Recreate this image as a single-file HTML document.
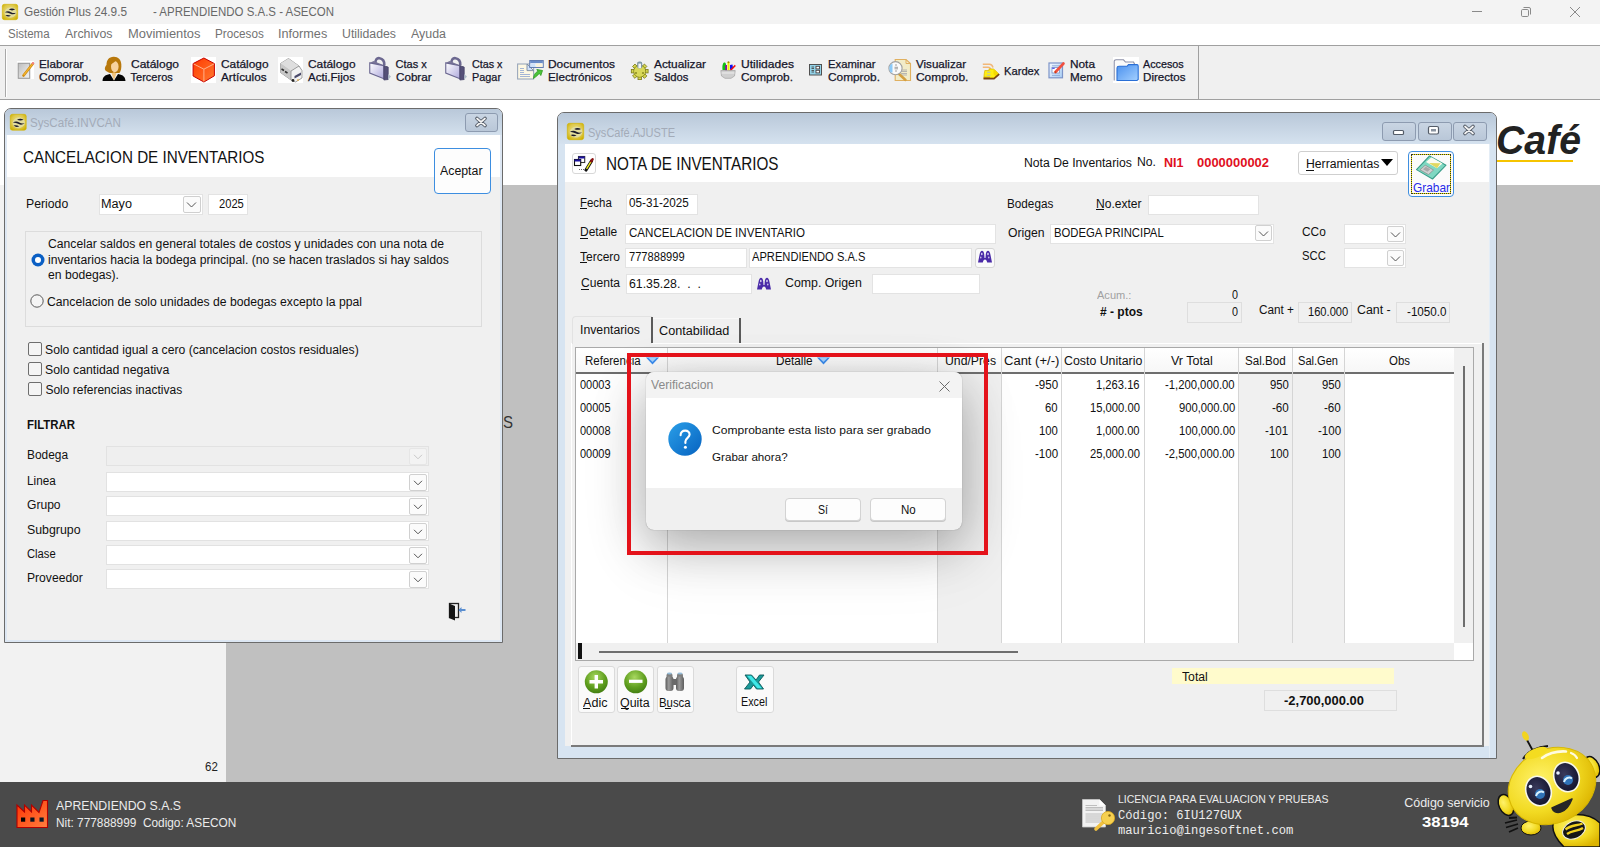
<!DOCTYPE html>
<html><head><meta charset="utf-8"><style>
html,body{margin:0;padding:0;}
body{width:1600px;height:847px;position:relative;overflow:hidden;background:#c0c0c0;font-family:"Liberation Sans",sans-serif;}
.t{position:absolute;white-space:pre;line-height:normal;transform-origin:0 0;}
svg{overflow:visible}
</style></head><body>
<div style="position:absolute;left:0px;top:0px;width:1600px;height:24px;background:#f3f3f3"></div>
<div style="position:absolute;left:0px;top:24px;width:1600px;height:21px;background:#ffffff"></div>
<div style="position:absolute;left:0px;top:45px;width:1600px;height:1px;background:#a0a0a0"></div>
<div style="position:absolute;left:0px;top:46px;width:1600px;height:53px;background:#f0f0f0"></div>
<div style="position:absolute;left:0px;top:99px;width:1600px;height:1px;background:#a0a0a0"></div>
<div style="position:absolute;left:0px;top:100px;width:1600px;height:85px;background:#ffffff"></div>
<div style="position:absolute;left:0px;top:185px;width:226px;height:597px;background:#f2f2f2"></div>
<div style="position:absolute;left:0px;top:782px;width:1600px;height:65px;background:#4a4a4a"></div>
<div class="t" style="left:24.4px;top:5.2px;font:12.5px 'Liberation Sans';color:#686868;transform:scaleX(0.9440);">Gestión Plus 24.9.5</div>
<div class="t" style="left:152.5px;top:5.2px;font:12.5px 'Liberation Sans';color:#686868;transform:scaleX(0.9175);">- APRENDIENDO S.A.S - ASECON</div>
<div style="position:absolute;left:1472px;top:11px;width:10px;height:1px;background:#8a8a8a"></div>
<svg style="position:absolute;left:1520px;top:6px" width="12" height="12" viewBox="0 0 12 12"><rect x="1.5" y="3.5" width="7" height="7" rx="1.2" fill="none" stroke="#8a8a8a" stroke-width="1"/><path d="M3.5 1.5 H9 A1.5 1.5 0 0 1 10.5 3 V8.5" fill="none" stroke="#8a8a8a" stroke-width="1"/></svg>
<svg style="position:absolute;left:1570px;top:7px" width="10" height="10" viewBox="0 0 10 10"><path d="M0 0 L10 10 M10 0 L0 10" stroke="#8a8a8a" stroke-width="1"/></svg>
<div class="t" style="left:7.8px;top:27.3px;font:12px 'Liberation Sans';color:#727272;transform:scaleX(0.9594);">Sistema</div>
<div class="t" style="left:65.0px;top:27.3px;font:12px 'Liberation Sans';color:#727272;transform:scaleX(1.0323);">Archivos</div>
<div class="t" style="left:127.5px;top:27.3px;font:12px 'Liberation Sans';color:#727272;transform:scaleX(1.0763);">Movimientos</div>
<div class="t" style="left:215.0px;top:27.3px;font:12px 'Liberation Sans';color:#727272;transform:scaleX(0.9744);">Procesos</div>
<div class="t" style="left:278.2px;top:27.3px;font:12px 'Liberation Sans';color:#727272;transform:scaleX(1.0549);">Informes</div>
<div class="t" style="left:342.0px;top:27.3px;font:12px 'Liberation Sans';color:#727272;transform:scaleX(1.0246);">Utilidades</div>
<div class="t" style="left:411.2px;top:27.3px;font:12px 'Liberation Sans';color:#727272;transform:scaleX(1.0351);">Ayuda</div>
<div style="position:absolute;left:5px;top:49px;width:1px;height:48px;background:#a8a8a8"></div>
<div style="position:absolute;left:6px;top:49px;width:1px;height:48px;background:#ffffff"></div>
<div style="position:absolute;left:1198px;top:45px;width:1px;height:55px;background:#a0a0a0"></div>
<div class="t" style="left:38.8px;top:57.8px;font:11px 'Liberation Sans';color:#15152a;transform:scaleX(1.0655);-webkit-text-stroke:0.25px #15152a;">Elaborar</div>
<div class="t" style="left:38.8px;top:71.0px;font:11px 'Liberation Sans';color:#15152a;transform:scaleX(1.0870);-webkit-text-stroke:0.25px #15152a;">Comprob.</div>
<div class="t" style="left:130.6px;top:57.8px;font:11px 'Liberation Sans';color:#15152a;transform:scaleX(1.0897);-webkit-text-stroke:0.25px #15152a;">Catálogo</div>
<div class="t" style="left:130.6px;top:71.0px;font:11px 'Liberation Sans';color:#15152a;-webkit-text-stroke:0.25px #15152a;">Terceros</div>
<div class="t" style="left:220.6px;top:57.8px;font:11px 'Liberation Sans';color:#15152a;transform:scaleX(1.0784);-webkit-text-stroke:0.25px #15152a;">Catálogo</div>
<div class="t" style="left:220.6px;top:71.0px;font:11px 'Liberation Sans';color:#15152a;transform:scaleX(1.0655);-webkit-text-stroke:0.25px #15152a;">Artículos</div>
<div class="t" style="left:308.0px;top:57.8px;font:11px 'Liberation Sans';color:#15152a;transform:scaleX(1.0807);-webkit-text-stroke:0.25px #15152a;">Catálogo</div>
<div class="t" style="left:308.0px;top:71.0px;font:11px 'Liberation Sans';color:#15152a;transform:scaleX(1.0532);-webkit-text-stroke:0.25px #15152a;">Acti.Fijos</div>
<div class="t" style="left:395.6px;top:57.8px;font:11px 'Liberation Sans';color:#15152a;-webkit-text-stroke:0.25px #15152a;">Ctas x</div>
<div class="t" style="left:395.6px;top:71.0px;font:11px 'Liberation Sans';color:#15152a;transform:scaleX(1.0587);-webkit-text-stroke:0.25px #15152a;">Cobrar</div>
<div class="t" style="left:472.0px;top:57.8px;font:11px 'Liberation Sans';color:#15152a;transform:scaleX(0.9780);-webkit-text-stroke:0.25px #15152a;">Ctas x</div>
<div class="t" style="left:472.0px;top:71.0px;font:11px 'Liberation Sans';color:#15152a;transform:scaleX(0.9878);-webkit-text-stroke:0.25px #15152a;">Pagar</div>
<div class="t" style="left:547.5px;top:57.8px;font:11px 'Liberation Sans';color:#15152a;transform:scaleX(1.0847);-webkit-text-stroke:0.25px #15152a;">Documentos</div>
<div class="t" style="left:547.5px;top:71.0px;font:11px 'Liberation Sans';color:#15152a;transform:scaleX(1.0639);-webkit-text-stroke:0.25px #15152a;">Electrónicos</div>
<div class="t" style="left:653.8px;top:57.8px;font:11px 'Liberation Sans';color:#15152a;transform:scaleX(1.0767);-webkit-text-stroke:0.25px #15152a;">Actualizar</div>
<div class="t" style="left:653.8px;top:71.0px;font:11px 'Liberation Sans';color:#15152a;transform:scaleX(1.0226);-webkit-text-stroke:0.25px #15152a;">Saldos</div>
<div class="t" style="left:740.6px;top:57.8px;font:11px 'Liberation Sans';color:#15152a;transform:scaleX(1.0970);-webkit-text-stroke:0.25px #15152a;">Utilidades</div>
<div class="t" style="left:740.6px;top:71.0px;font:11px 'Liberation Sans';color:#15152a;transform:scaleX(1.0767);-webkit-text-stroke:0.25px #15152a;">Comprob.</div>
<div class="t" style="left:828.0px;top:57.8px;font:11px 'Liberation Sans';color:#15152a;transform:scaleX(1.0243);-webkit-text-stroke:0.25px #15152a;">Examinar</div>
<div class="t" style="left:828.0px;top:71.0px;font:11px 'Liberation Sans';color:#15152a;transform:scaleX(1.0767);-webkit-text-stroke:0.25px #15152a;">Comprob.</div>
<div class="t" style="left:915.6px;top:57.8px;font:11px 'Liberation Sans';color:#15152a;transform:scaleX(1.0526);-webkit-text-stroke:0.25px #15152a;">Visualizar</div>
<div class="t" style="left:915.6px;top:71.0px;font:11px 'Liberation Sans';color:#15152a;transform:scaleX(1.0850);-webkit-text-stroke:0.25px #15152a;">Comprob.</div>
<div class="t" style="left:1070.0px;top:57.8px;font:11px 'Liberation Sans';color:#15152a;transform:scaleX(1.0753);-webkit-text-stroke:0.25px #15152a;">Nota</div>
<div class="t" style="left:1070.0px;top:71.0px;font:11px 'Liberation Sans';color:#15152a;transform:scaleX(1.0634);-webkit-text-stroke:0.25px #15152a;">Memo</div>
<div class="t" style="left:1143.0px;top:57.8px;font:11px 'Liberation Sans';color:#15152a;transform:scaleX(0.9801);-webkit-text-stroke:0.25px #15152a;">Accesos</div>
<div class="t" style="left:1143.0px;top:71.0px;font:11px 'Liberation Sans';color:#15152a;transform:scaleX(1.0559);-webkit-text-stroke:0.25px #15152a;">Directos</div>
<div class="t" style="left:1004.0px;top:65.0px;font:11px 'Liberation Sans';color:#15152a;transform:scaleX(1.0155);-webkit-text-stroke:0.25px #15152a;">Kardex</div>
<div style="position:absolute;left:4px;top:108px;width:497px;height:533px;border:1px solid #6b6b6b;border-radius:7px 7px 0 0;background:#dde7f3"></div>
<div style="position:absolute;left:5px;top:109px;width:497px;height:26px;background:linear-gradient(#b9c8d9,#d3e0ed);border-radius:6px 6px 0 0"></div>
<div style="position:absolute;left:7px;top:135px;width:493px;height:42px;background:#ffffff"></div>
<div style="position:absolute;left:7px;top:177px;width:493px;height:463px;background:#f0f0f0"></div>
<div class="t" style="left:30.4px;top:115.7px;font:12.5px 'Liberation Sans';color:#a3abb8;transform:scaleX(0.9290);">SysCafé.INVCAN</div>
<div style="position:absolute;left:465px;top:113px;width:31px;height:17px;border:1px solid #8d9bb0;border-radius:3px;background:linear-gradient(#c9d5e3,#b9c7d8)"></div>
<svg style="position:absolute;left:475px;top:117px" width="12" height="10" viewBox="0 0 12 10"><path d="M2 1.5 L10 8.5 M10 1.5 L2 8.5" stroke="#4e5662" stroke-width="3.6" stroke-linecap="round"/><path d="M2 1.5 L10 8.5 M10 1.5 L2 8.5" stroke="#f4f4f4" stroke-width="1.7" stroke-linecap="round"/></svg>
<div class="t" style="left:23.3px;top:148.4px;font:17px 'Liberation Sans';color:#111;transform:scaleX(0.8950);">CANCELACION DE INVENTARIOS</div>
<div style="position:absolute;left:434px;top:148px;width:55px;height:44px;border:1px solid #3d8ee0;border-radius:4px;background:#fdfdfd"></div>
<div class="t" style="left:440.2px;top:164.1px;font:12px 'Liberation Sans';color:#111;transform:scaleX(1.0276);">Aceptar</div>
<div class="t" style="left:26.4px;top:197.2px;font:12.5px 'Liberation Sans';color:#111;transform:scaleX(0.9793);">Periodo</div>
<div style="position:absolute;left:99px;top:194px;width:102px;height:19px;background:#fff;border:1px solid #e3e3e3"></div>
<div style="position:absolute;left:183px;top:196px;width:16px;height:15px;background:#fbfbfb;border:1px solid #cfcfcf;border-radius:2px"></div>
<div class="t" style="left:101.0px;top:197.2px;font:12.5px 'Liberation Sans';color:#111;transform:scaleX(1.0138);">Mayo</div>
<div style="position:absolute;left:208px;top:194px;width:38px;height:19px;background:#fff;border:1px solid #e3e3e3"></div>
<div class="t" style="left:219.0px;top:197.2px;font:12.5px 'Liberation Sans';color:#111;transform:scaleX(0.8917);">2025</div>
<div style="position:absolute;left:25px;top:231px;width:455px;height:94px;border:1px solid #dcdcdc"></div>
<div class="t" style="left:48.1px;top:236.9px;font:12px 'Liberation Sans';color:#111;transform:scaleX(1.0147);">Cancelar saldos en general totales de costos y unidades con una nota de</div>
<div class="t" style="left:48.1px;top:252.6px;font:12px 'Liberation Sans';color:#111;transform:scaleX(1.0149);">inventarios hacia la bodega principal. (no se hacen traslados si hay saldos</div>
<div class="t" style="left:48.1px;top:268.1px;font:12px 'Liberation Sans';color:#111;transform:scaleX(1.0134);">en bodegas).</div>
<div class="t" style="left:47.3px;top:294.7px;font:12px 'Liberation Sans';color:#111;transform:scaleX(1.0154);">Cancelacion de solo unidades de bodegas excepto la ppal</div>
<svg style="position:absolute;left:31px;top:253px" width="14" height="14" viewBox="0 0 14 14"><circle cx="7" cy="7" r="6.5" fill="#0a5fc4"/><circle cx="7" cy="7" r="3" fill="#fff"/></svg>
<svg style="position:absolute;left:30px;top:294px" width="14" height="14" viewBox="0 0 14 14"><circle cx="7" cy="7" r="6.2" fill="#f4f4f4" stroke="#5a5a5a" stroke-width="1"/></svg>
<div style="position:absolute;left:28px;top:342px;width:12px;height:12px;border:1px solid #6e6e6e;border-radius:2px;background:#f4f4f4"></div>
<div class="t" style="left:45.4px;top:343.1px;font:12px 'Liberation Sans';color:#111;transform:scaleX(1.0157);">Solo cantidad igual a cero (cancelacion costos residuales)</div>
<div style="position:absolute;left:28px;top:362px;width:12px;height:12px;border:1px solid #6e6e6e;border-radius:2px;background:#f4f4f4"></div>
<div class="t" style="left:45.4px;top:363.1px;font:12px 'Liberation Sans';color:#111;transform:scaleX(1.0236);">Solo cantidad negativa</div>
<div style="position:absolute;left:28px;top:382px;width:12px;height:12px;border:1px solid #6e6e6e;border-radius:2px;background:#f4f4f4"></div>
<div class="t" style="left:45.4px;top:383.1px;font:12px 'Liberation Sans';color:#111;">Solo referencias inactivas</div>
<div class="t" style="left:26.5px;top:418.1px;font:bold 12px 'Liberation Sans';color:#111;transform:scaleX(0.9517);">FILTRAR</div>
<div class="t" style="left:26.5px;top:448.0px;font:12px 'Liberation Sans';color:#111;transform:scaleX(0.9909);">Bodega</div>
<div style="position:absolute;left:106px;top:446px;width:321px;height:18px;border:1px solid #e2e2e2;background:#efefef"></div>
<div style="position:absolute;left:409px;top:448px;width:16px;height:15px;border:1px solid #e6e6e6;border-radius:2px;background:#f3f3f3"></div>
<svg style="position:absolute;left:413px;top:454px" width="10" height="6" viewBox="0 0 10 6"><path d="M1 0.8 L5 4.8 L9 0.8" fill="none" stroke="#c8c8c8" stroke-width="1"/></svg>
<div class="t" style="left:26.5px;top:473.9px;font:12px 'Liberation Sans';color:#111;transform:scaleX(0.9770);">Linea</div>
<div style="position:absolute;left:106px;top:472px;width:321px;height:18px;border:1px solid #e2e2e2;background:#fff"></div>
<div style="position:absolute;left:409px;top:474px;width:16px;height:15px;border:1px solid #d0d0d0;border-radius:2px;background:#fbfbfb"></div>
<svg style="position:absolute;left:413px;top:480px" width="10" height="6" viewBox="0 0 10 6"><path d="M1 0.8 L5 4.8 L9 0.8" fill="none" stroke="#555" stroke-width="1"/></svg>
<div class="t" style="left:26.5px;top:498.1px;font:12px 'Liberation Sans';color:#111;transform:scaleX(1.0072);">Grupo</div>
<div style="position:absolute;left:106px;top:496px;width:321px;height:18px;border:1px solid #e2e2e2;background:#fff"></div>
<div style="position:absolute;left:409px;top:498px;width:16px;height:15px;border:1px solid #d0d0d0;border-radius:2px;background:#fbfbfb"></div>
<svg style="position:absolute;left:413px;top:504px" width="10" height="6" viewBox="0 0 10 6"><path d="M1 0.8 L5 4.8 L9 0.8" fill="none" stroke="#555" stroke-width="1"/></svg>
<div class="t" style="left:26.5px;top:523.0px;font:12px 'Liberation Sans';color:#111;transform:scaleX(1.0298);">Subgrupo</div>
<div style="position:absolute;left:106px;top:521px;width:321px;height:18px;border:1px solid #e2e2e2;background:#fff"></div>
<div style="position:absolute;left:409px;top:523px;width:16px;height:15px;border:1px solid #d0d0d0;border-radius:2px;background:#fbfbfb"></div>
<svg style="position:absolute;left:413px;top:529px" width="10" height="6" viewBox="0 0 10 6"><path d="M1 0.8 L5 4.8 L9 0.8" fill="none" stroke="#555" stroke-width="1"/></svg>
<div class="t" style="left:26.5px;top:547.1px;font:12px 'Liberation Sans';color:#111;transform:scaleX(0.9352);">Clase</div>
<div style="position:absolute;left:106px;top:545px;width:321px;height:18px;border:1px solid #e2e2e2;background:#fff"></div>
<div style="position:absolute;left:409px;top:547px;width:16px;height:15px;border:1px solid #d0d0d0;border-radius:2px;background:#fbfbfb"></div>
<svg style="position:absolute;left:413px;top:553px" width="10" height="6" viewBox="0 0 10 6"><path d="M1 0.8 L5 4.8 L9 0.8" fill="none" stroke="#555" stroke-width="1"/></svg>
<div class="t" style="left:26.5px;top:570.7px;font:12px 'Liberation Sans';color:#111;transform:scaleX(1.0095);">Proveedor</div>
<div style="position:absolute;left:106px;top:569px;width:321px;height:18px;border:1px solid #e2e2e2;background:#fff"></div>
<div style="position:absolute;left:409px;top:571px;width:16px;height:15px;border:1px solid #d0d0d0;border-radius:2px;background:#fbfbfb"></div>
<svg style="position:absolute;left:413px;top:577px" width="10" height="6" viewBox="0 0 10 6"><path d="M1 0.8 L5 4.8 L9 0.8" fill="none" stroke="#555" stroke-width="1"/></svg>
<svg style="position:absolute;left:186px;top:202px" width="11" height="6" viewBox="0 0 11 6"><path d="M1 0.5 L5.5 5 L10 0.5" fill="none" stroke="#555" stroke-width="1"/></svg>
<svg style="position:absolute;left:447px;top:602px" width="20" height="19" viewBox="0 0 20 19"><rect x="2.5" y="1.5" width="9" height="14" fill="none" stroke="#222" stroke-width="1.3"/><path d="M2 1.5 L8 4 V18.5 L2 16 Z" fill="#151515"/><path d="M12 8 H18.5" stroke="#5a8ed0" stroke-width="2"/><path d="M11.5 8 L14.5 5 V11 Z" fill="#5a8ed0"/></svg>
<div class="t" style="left:502.5px;top:412.6px;font:17px 'Liberation Sans';color:#333;transform:scaleX(0.8815);">S</div>
<div class="t" style="left:205.0px;top:760.3px;font:12px 'Liberation Sans';color:#222;transform:scaleX(0.9581);">62</div>
<div style="position:absolute;left:557px;top:112px;width:938px;height:645px;border:1px solid #6b6b6b;border-radius:7px 7px 0 0;background:#d7e4f1"></div>
<div style="position:absolute;left:558px;top:113px;width:938px;height:31px;background:linear-gradient(#b9c8d9,#d5e2ef);border-radius:6px 6px 0 0"></div>
<div style="position:absolute;left:565px;top:144px;width:924px;height:38px;background:#ffffff"></div>
<div style="position:absolute;left:565px;top:182px;width:924px;height:564px;background:#f0f0f0"></div>
<div style="position:absolute;left:571px;top:343px;width:912px;height:1px;background:#ffffff"></div>
<div style="position:absolute;left:571px;top:343px;width:1px;height:403px;background:#ffffff"></div>
<div style="position:absolute;left:1482px;top:343px;width:2px;height:404px;background:#7a7a7a"></div>
<div style="position:absolute;left:571px;top:745px;width:913px;height:2px;background:#7a7a7a"></div>
<div style="position:absolute;left:1489px;top:144px;width:1px;height:614px;background:#e4edf6"></div>
<div class="t" style="left:588.0px;top:126.2px;font:12.5px 'Liberation Sans';color:#a3abb8;transform:scaleX(0.8820);">SysCafé.AJUSTE</div>
<div style="position:absolute;left:1382px;top:122px;width:32px;height:17px;border:1px solid #8d9bb0;border-radius:3px;background:linear-gradient(#c9d5e3,#b9c7d8)"></div>
<div style="position:absolute;left:1418px;top:122px;width:32px;height:17px;border:1px solid #8d9bb0;border-radius:3px;background:linear-gradient(#c9d5e3,#b9c7d8)"></div>
<div style="position:absolute;left:1453px;top:122px;width:32px;height:17px;border:1px solid #8d9bb0;border-radius:3px;background:linear-gradient(#c9d5e3,#b9c7d8)"></div>
<svg style="position:absolute;left:1392px;top:126px" width="14" height="10" viewBox="0 0 14 10"><rect x="1.5" y="4.5" width="10" height="4" rx="1" fill="#fff" stroke="#545c68" stroke-width="1.2"/></svg>
<svg style="position:absolute;left:1427px;top:125px" width="14" height="11" viewBox="0 0 14 11"><rect x="1.5" y="1.5" width="10" height="7.5" rx="1.5" fill="#fff" stroke="#545c68" stroke-width="1.2"/><rect x="4" y="4" width="5" height="2.5" fill="#8a93a0"/></svg>
<svg style="position:absolute;left:1463px;top:125px" width="12" height="10" viewBox="0 0 12 10"><path d="M2 1.5 L10 8.5 M10 1.5 L2 8.5" stroke="#4e5662" stroke-width="3.6" stroke-linecap="round"/><path d="M2 1.5 L10 8.5 M10 1.5 L2 8.5" stroke="#f4f4f4" stroke-width="1.7" stroke-linecap="round"/></svg>
<div style="position:absolute;left:572px;top:153px;width:22px;height:19px;border:1px solid #d8d8d8;border-radius:3px;background:#fff"></div>
<div class="t" style="left:606.3px;top:153.7px;font:17.5px 'Liberation Sans';color:#111;transform:scaleX(0.8725);">NOTA DE INVENTARIOS</div>
<div class="t" style="left:1024.4px;top:156.1px;font:12px 'Liberation Sans';color:#111;transform:scaleX(1.0164);">Nota De Inventarios</div>
<div class="t" style="left:1136.5px;top:154.7px;font:12px 'Liberation Sans';color:#111;transform:scaleX(1.0167);">No.</div>
<div class="t" style="left:1164.0px;top:155.7px;font:bold 12.5px 'Liberation Sans';color:#e0101e;">NI1</div>
<div class="t" style="left:1196.9px;top:155.7px;font:bold 12.5px 'Liberation Sans';color:#e0101e;transform:scaleX(1.0355);">0000000002</div>
<div style="position:absolute;left:1298px;top:151px;width:98px;height:22px;border:1px solid #cfcfcf;border-radius:3px;background:#fff"></div>
<div class="t" style="left:1305.6px;top:157.1px;font:12px 'Liberation Sans';color:#111;transform:scaleX(1.0176);">Herramientas</div>
<div style="position:absolute;left:1305.5px;top:169.5px;width:8px;height:1px;background:#111"></div>
<svg style="position:absolute;left:1381px;top:159px" width="12" height="8" viewBox="0 0 12 8"><path d="M0 0 H12 L6 7 Z" fill="#000"/></svg>
<div style="position:absolute;left:1408px;top:151px;width:44px;height:44px;border:1px solid #3f8fe0;border-radius:4px;background:#fbfbfb"></div>
<div style="position:absolute;left:1411px;top:154px;width:38px;height:38px;border:1px dotted #555;background:transparent"></div>
<div class="t" style="left:1412.8px;top:180.2px;font:13px 'Liberation Sans';color:#2a2ae8;transform:scaleX(0.9143);text-decoration:underline;">Grabar</div>
<div class="t" style="left:580.0px;top:195.7px;font:12.5px 'Liberation Sans';color:#111;transform:scaleX(0.9151);">Fecha</div>
<div style="position:absolute;left:580px;top:208px;width:7px;height:1px;background:#111"></div>
<div style="position:absolute;left:626px;top:194px;width:70px;height:19px;background:#fff;border:1px solid #e3e3e3"></div>
<div class="t" style="left:628.7px;top:196.2px;font:12.5px 'Liberation Sans';color:#111;transform:scaleX(0.9351);">05-31-2025</div>
<div class="t" style="left:580.0px;top:225.2px;font:12.5px 'Liberation Sans';color:#111;transform:scaleX(0.9570);">Detalle</div>
<div style="position:absolute;left:580px;top:237.5px;width:8px;height:1px;background:#111"></div>
<div style="position:absolute;left:625px;top:224px;width:369px;height:18px;background:#fff;border:1px solid #e3e3e3"></div>
<div class="t" style="left:628.8px;top:225.5px;font:12.5px 'Liberation Sans';color:#111;transform:scaleX(0.9259);">CANCELACION DE INVENTARIO</div>
<div class="t" style="left:580.0px;top:250.0px;font:12.5px 'Liberation Sans';color:#111;transform:scaleX(0.9595);">Tercero</div>
<div style="position:absolute;left:580px;top:262.3px;width:7px;height:1px;background:#111"></div>
<div style="position:absolute;left:625px;top:248px;width:120px;height:18px;background:#fff;border:1px solid #e3e3e3"></div>
<div class="t" style="left:628.8px;top:250.2px;font:12.5px 'Liberation Sans';color:#111;transform:scaleX(0.8885);">777888999</div>
<div style="position:absolute;left:749px;top:248px;width:221px;height:18px;background:#fff;border:1px solid #e3e3e3"></div>
<div class="t" style="left:751.8px;top:250.2px;font:12.5px 'Liberation Sans';color:#111;transform:scaleX(0.8920);">APRENDIENDO S.A.S</div>
<div style="position:absolute;left:975px;top:248px;width:18px;height:18px;border:1px solid #d6d6d6;border-radius:3px;background:#fafafa"></div>
<div class="t" style="left:581.0px;top:276.2px;font:12.5px 'Liberation Sans';color:#111;transform:scaleX(0.9674);">Cuenta</div>
<div style="position:absolute;left:581px;top:288.5px;width:8px;height:1px;background:#111"></div>
<div style="position:absolute;left:626px;top:274px;width:124px;height:18px;background:#fff;border:1px solid #e3e3e3"></div>
<div class="t" style="left:628.8px;top:276.5px;font:12.5px 'Liberation Sans';color:#111;transform:scaleX(0.9854);">61.35.28.  .  .</div>
<div class="t" style="left:784.7px;top:276.3px;font:12.5px 'Liberation Sans';color:#111;transform:scaleX(0.9870);">Comp. Origen</div>
<div style="position:absolute;left:872px;top:274px;width:106px;height:18px;background:#fff;border:1px solid #e3e3e3"></div>
<div class="t" style="left:1006.6px;top:196.7px;font:12.5px 'Liberation Sans';color:#111;transform:scaleX(0.9380);">Bodegas</div>
<div class="t" style="left:1096.0px;top:196.7px;font:12.5px 'Liberation Sans';color:#111;transform:scaleX(0.9651);">No.exter</div>
<div style="position:absolute;left:1096px;top:209px;width:8px;height:1px;background:#111"></div>
<div style="position:absolute;left:1148px;top:195px;width:109px;height:18px;background:#fff;border:1px solid #e3e3e3"></div>
<div class="t" style="left:1007.5px;top:225.7px;font:12.5px 'Liberation Sans';color:#111;transform:scaleX(0.9752);">Origen</div>
<div style="position:absolute;left:1050px;top:224px;width:222px;height:18px;background:#fff;border:1px solid #e3e3e3"></div>
<div style="position:absolute;left:1255px;top:225px;width:15px;height:14px;border:1px solid #d0d0d0;border-radius:2px;background:#fbfbfb"></div>
<svg style="position:absolute;left:1258px;top:231px" width="11" height="6" viewBox="0 0 11 6"><path d="M1 0.5 L5.5 5 L10 0.5" fill="none" stroke="#555" stroke-width="1"/></svg>
<div class="t" style="left:1054.4px;top:225.9px;font:12.5px 'Liberation Sans';color:#111;transform:scaleX(0.9040);">BODEGA PRINCIPAL</div>
<div class="t" style="left:1302.4px;top:225.4px;font:12.5px 'Liberation Sans';color:#111;transform:scaleX(0.9514);">CCo</div>
<div style="position:absolute;left:1344px;top:224px;width:60px;height:18px;background:#fff;border:1px solid #e3e3e3"></div>
<div style="position:absolute;left:1387px;top:226px;width:15px;height:14px;border:1px solid #d0d0d0;border-radius:2px;background:#fbfbfb"></div>
<svg style="position:absolute;left:1390px;top:232px" width="11" height="6" viewBox="0 0 11 6"><path d="M1 0.5 L5.5 5 L10 0.5" fill="none" stroke="#555" stroke-width="1"/></svg>
<div class="t" style="left:1302.4px;top:249.2px;font:12.5px 'Liberation Sans';color:#111;transform:scaleX(0.9013);">SCC</div>
<div style="position:absolute;left:1344px;top:248px;width:60px;height:18px;background:#fff;border:1px solid #e3e3e3"></div>
<div style="position:absolute;left:1387px;top:250px;width:15px;height:14px;border:1px solid #d0d0d0;border-radius:2px;background:#fbfbfb"></div>
<svg style="position:absolute;left:1390px;top:256px" width="11" height="6" viewBox="0 0 11 6"><path d="M1 0.5 L5.5 5 L10 0.5" fill="none" stroke="#555" stroke-width="1"/></svg>
<div class="t" style="left:1097.2px;top:288.9px;font:11.5px 'Liberation Sans';color:#a0a0a0;transform:scaleX(0.9610);">Acum.:</div>
<div class="t" style="left:1231.5px;top:288.4px;font:12px 'Liberation Sans';color:#111;transform:scaleX(0.8972);">0</div>
<div class="t" style="left:1100.0px;top:304.6px;font:bold 12px 'Liberation Sans';color:#111;"># - ptos</div>
<div style="position:absolute;left:1187px;top:302px;width:53px;height:19px;background:#f0f0f0;border:1px solid #dedede"></div>
<div class="t" style="left:1231.5px;top:304.9px;font:12px 'Liberation Sans';color:#111;transform:scaleX(0.8972);">0</div>
<div class="t" style="left:1258.8px;top:302.8px;font:12px 'Liberation Sans';color:#111;transform:scaleX(0.9803);">Cant +</div>
<div style="position:absolute;left:1298px;top:302px;width:52px;height:19px;background:#f0f0f0;border:1px solid #dedede"></div>
<div class="t" style="left:1307.8px;top:305.1px;font:12px 'Liberation Sans';color:#111;transform:scaleX(0.9265);">160.000</div>
<div class="t" style="left:1357.4px;top:302.5px;font:12px 'Liberation Sans';color:#111;transform:scaleX(1.0310);">Cant -</div>
<div style="position:absolute;left:1396px;top:302px;width:52px;height:19px;background:#f0f0f0;border:1px solid #dedede"></div>
<div class="t" style="left:1406.5px;top:305.1px;font:12px 'Liberation Sans';color:#111;transform:scaleX(0.9704);">-1050.0</div>
<div style="position:absolute;left:572px;top:316px;width:79px;height:27px;border-top:1px solid #e2e2e2;border-left:1px solid #e2e2e2;border-radius:4px 0 0 0;background:#f0f0f0"></div>
<div style="position:absolute;left:651px;top:317px;width:2px;height:26px;background:#5a5a5a"></div>
<div style="position:absolute;left:739px;top:318px;width:2px;height:25px;background:#5a5a5a"></div>
<div style="position:absolute;left:653px;top:318px;width:86px;height:1px;background:#f8f8f8"></div>
<div class="t" style="left:580.0px;top:322.7px;font:12.5px 'Liberation Sans';color:#111;transform:scaleX(0.9811);">Inventarios</div>
<div class="t" style="left:659.4px;top:324.3px;font:12.5px 'Liberation Sans';color:#111;transform:scaleX(1.0129);">Contabilidad</div>
<div style="position:absolute;left:575px;top:347px;width:899px;height:314px;background:#ffffff;border:1px solid #a9a9a9;box-sizing:border-box"></div>
<div style="position:absolute;left:576px;top:348px;width:878px;height:24px;background:linear-gradient(#ffffff,#f7f7f7)"></div>
<div style="position:absolute;left:576px;top:372px;width:878px;height:2px;background:#6e6e6e"></div>
<div style="position:absolute;left:1239px;top:374px;width:106px;height:269px;background:#f0f0f0"></div>
<div style="position:absolute;left:938px;top:374px;width:63px;height:269px;background:#f0f0f0"></div>
<div style="position:absolute;left:667px;top:348px;width:1px;height:295px;background:#d5d5d5"></div>
<div style="position:absolute;left:937px;top:348px;width:1px;height:295px;background:#d5d5d5"></div>
<div style="position:absolute;left:1001px;top:348px;width:1px;height:295px;background:#d5d5d5"></div>
<div style="position:absolute;left:1061px;top:348px;width:1px;height:295px;background:#d5d5d5"></div>
<div style="position:absolute;left:1144px;top:348px;width:1px;height:295px;background:#d5d5d5"></div>
<div style="position:absolute;left:1238px;top:348px;width:1px;height:295px;background:#d5d5d5"></div>
<div style="position:absolute;left:1292px;top:348px;width:1px;height:295px;background:#d5d5d5"></div>
<div style="position:absolute;left:1344px;top:348px;width:1px;height:295px;background:#d5d5d5"></div>
<div style="position:absolute;left:1454px;top:348px;width:19px;height:295px;background:#f0f0f0"></div>
<div style="position:absolute;left:1463px;top:366px;width:2px;height:261px;background:#6e6e6e"></div>
<div style="position:absolute;left:576px;top:643px;width:878px;height:17px;background:#f0f0f0"></div>
<div style="position:absolute;left:1454px;top:643px;width:19px;height:17px;background:#ffffff"></div>
<div style="position:absolute;left:578px;top:643px;width:4px;height:16px;background:#111"></div>
<div style="position:absolute;left:599px;top:651px;width:419px;height:2px;background:#6e6e6e"></div>
<div class="t" style="left:585.4px;top:353.7px;font:12.5px 'Liberation Sans';color:#111;transform:scaleX(0.9197);">Referencia</div>
<div class="t" style="left:776.3px;top:353.7px;font:12.5px 'Liberation Sans';color:#111;transform:scaleX(0.9403);">Detalle</div>
<svg style="position:absolute;left:646px;top:357px" width="13" height="8" viewBox="0 0 13 8"><path d="M0 0.5 H13 L6.5 7.5 Z" fill="#3a8df0"/><path d="M2.5 1 H10.5 L6.5 5 Z" fill="#a8d4ff"/></svg>
<svg style="position:absolute;left:817px;top:357px" width="13" height="8" viewBox="0 0 13 8"><path d="M0 0.5 H13 L6.5 7.5 Z" fill="#3a8df0"/><path d="M2.5 1 H10.5 L6.5 5 Z" fill="#a8d4ff"/></svg>
<div class="t" style="left:944.5px;top:353.7px;font:12.5px 'Liberation Sans';color:#111;transform:scaleX(0.9787);">Und/Pres</div>
<div class="t" style="left:1004.4px;top:353.7px;font:12.5px 'Liberation Sans';color:#111;transform:scaleX(1.0406);">Cant (+/-)</div>
<div class="t" style="left:1063.8px;top:353.7px;font:12.5px 'Liberation Sans';color:#111;transform:scaleX(0.9880);">Costo Unitario</div>
<div class="t" style="left:1171.0px;top:353.7px;font:12.5px 'Liberation Sans';color:#111;">Vr Total</div>
<div class="t" style="left:1245.4px;top:353.7px;font:12.5px 'Liberation Sans';color:#111;transform:scaleX(0.9273);">Sal.Bod</div>
<div class="t" style="left:1298.0px;top:353.7px;font:12.5px 'Liberation Sans';color:#111;transform:scaleX(0.8855);">Sal.Gen</div>
<div class="t" style="left:1389.0px;top:353.7px;font:12.5px 'Liberation Sans';color:#111;transform:scaleX(0.9155);">Obs</div>
<div class="t" style="left:580.0px;top:378.2px;font:12.5px 'Liberation Sans';color:#111;transform:scaleX(0.8802);">00003</div>
<div class="t" style="left:1034.9px;top:378.2px;font:12.5px 'Liberation Sans';color:#111;transform:scaleX(0.9228);">-950</div>
<div class="t" style="left:1096.4px;top:378.2px;font:12.5px 'Liberation Sans';color:#111;transform:scaleX(0.8958);">1,263.16</div>
<div class="t" style="left:1165.4px;top:378.2px;font:12.5px 'Liberation Sans';color:#111;transform:scaleX(0.9021);">-1,200,000.00</div>
<div class="t" style="left:1269.6px;top:378.2px;font:12.5px 'Liberation Sans';color:#111;transform:scaleX(0.9061);">950</div>
<div class="t" style="left:1322.1px;top:378.2px;font:12.5px 'Liberation Sans';color:#111;transform:scaleX(0.9061);">950</div>
<div class="t" style="left:580.0px;top:401.1px;font:12.5px 'Liberation Sans';color:#111;transform:scaleX(0.8802);">00005</div>
<div class="t" style="left:1045.4px;top:401.1px;font:12.5px 'Liberation Sans';color:#111;transform:scaleX(0.9061);">60</div>
<div class="t" style="left:1090.1px;top:401.1px;font:12.5px 'Liberation Sans';color:#111;transform:scaleX(0.8973);">15,000.00</div>
<div class="t" style="left:1178.8px;top:401.1px;font:12.5px 'Liberation Sans';color:#111;transform:scaleX(0.8983);">900,000.00</div>
<div class="t" style="left:1271.7px;top:401.1px;font:12.5px 'Liberation Sans';color:#111;transform:scaleX(0.9293);">-60</div>
<div class="t" style="left:1324.2px;top:401.1px;font:12.5px 'Liberation Sans';color:#111;transform:scaleX(0.9293);">-60</div>
<div class="t" style="left:580.0px;top:424.1px;font:12.5px 'Liberation Sans';color:#111;transform:scaleX(0.8802);">00008</div>
<div class="t" style="left:1039.1px;top:424.1px;font:12.5px 'Liberation Sans';color:#111;transform:scaleX(0.9061);">100</div>
<div class="t" style="left:1096.4px;top:424.1px;font:12.5px 'Liberation Sans';color:#111;transform:scaleX(0.8958);">1,000.00</div>
<div class="t" style="left:1178.8px;top:424.1px;font:12.5px 'Liberation Sans';color:#111;transform:scaleX(0.8983);">100,000.00</div>
<div class="t" style="left:1265.4px;top:424.1px;font:12.5px 'Liberation Sans';color:#111;transform:scaleX(0.9228);">-101</div>
<div class="t" style="left:1317.9px;top:424.1px;font:12.5px 'Liberation Sans';color:#111;transform:scaleX(0.9228);">-100</div>
<div class="t" style="left:580.0px;top:447.0px;font:12.5px 'Liberation Sans';color:#111;transform:scaleX(0.8802);">00009</div>
<div class="t" style="left:1034.9px;top:447.0px;font:12.5px 'Liberation Sans';color:#111;transform:scaleX(0.9228);">-100</div>
<div class="t" style="left:1090.1px;top:447.0px;font:12.5px 'Liberation Sans';color:#111;transform:scaleX(0.8973);">25,000.00</div>
<div class="t" style="left:1165.4px;top:447.0px;font:12.5px 'Liberation Sans';color:#111;transform:scaleX(0.9021);">-2,500,000.00</div>
<div class="t" style="left:1269.6px;top:447.0px;font:12.5px 'Liberation Sans';color:#111;transform:scaleX(0.9061);">100</div>
<div class="t" style="left:1322.1px;top:447.0px;font:12.5px 'Liberation Sans';color:#111;transform:scaleX(0.9061);">100</div>
<div style="position:absolute;left:578px;top:666px;width:35px;height:45px;border:1px solid #dadada;border-radius:3px;background:#fafafa"></div>
<div class="t" style="left:583.0px;top:695.8px;font:12px 'Liberation Sans';color:#111;transform:scaleX(1.0495);">Adic</div>
<div style="position:absolute;left:617px;top:666px;width:35px;height:45px;border:1px solid #dadada;border-radius:3px;background:#fafafa"></div>
<div class="t" style="left:620.3px;top:695.8px;font:12px 'Liberation Sans';color:#111;transform:scaleX(1.0353);">Quita</div>
<div style="position:absolute;left:657px;top:666px;width:35px;height:45px;border:1px solid #dadada;border-radius:3px;background:#fafafa"></div>
<div class="t" style="left:659.0px;top:695.8px;font:12px 'Liberation Sans';color:#111;transform:scaleX(0.9473);">Busca</div>
<div style="position:absolute;left:583px;top:707.7px;width:7px;height:1px;background:#111"></div>
<div style="position:absolute;left:620.5px;top:707.7px;width:8px;height:1px;background:#111"></div>
<div style="position:absolute;left:665px;top:707.7px;width:6px;height:1px;background:#111"></div>
<div style="position:absolute;left:736px;top:666px;width:36px;height:45px;border:1px solid #dadada;border-radius:3px;background:#fafafa"></div>
<div class="t" style="left:740.6px;top:694.5px;font:12px 'Liberation Sans';color:#111;transform:scaleX(0.8963);">Excel</div>
<div style="position:absolute;left:1172px;top:668px;width:222px;height:16px;background:#fffbcc"></div>
<div class="t" style="left:1181.8px;top:670.1px;font:12px 'Liberation Sans';color:#111;transform:scaleX(1.0174);">Total</div>
<div style="position:absolute;left:1264px;top:690px;width:131px;height:19px;background:#f0f0f0;border:1px solid #dedede"></div>
<div class="t" style="left:1283.6px;top:693.7px;font:bold 12.5px 'Liberation Sans';color:#111;transform:scaleX(1.0369);">-2,700,000.00</div>
<div style="position:absolute;left:646px;top:372px;width:316px;height:158px;border-radius:8px;box-shadow:0 14px 50px rgba(0,0,0,0.28), 0 24px 70px rgba(0,0,0,0.10), 0 0 1px rgba(0,0,0,0.45);background:#f0f0f0;overflow:hidden"></div>
<div style="position:absolute;left:646px;top:372px;width:316px;height:26px;background:#f3f3f3;border-radius:8px 8px 0 0"></div>
<div style="position:absolute;left:646px;top:398px;width:316px;height:90px;background:#ffffff"></div>
<div class="t" style="left:651.2px;top:377.7px;font:12.5px 'Liberation Sans';color:#8a8a8a;transform:scaleX(0.9744);">Verificacion</div>
<svg style="position:absolute;left:939px;top:381px" width="11" height="11" viewBox="0 0 11 11"><path d="M0.5 0.5 L10.5 10.5 M10.5 0.5 L0.5 10.5" stroke="#6a6a6a" stroke-width="1"/></svg>
<svg style="position:absolute;left:668px;top:422px" width="34" height="34" viewBox="0 0 34 34"><defs><linearGradient id="qg" x1="0" y1="0" x2="1" y2="1"><stop offset="0" stop-color="#2a9fe8"/><stop offset="1" stop-color="#0662c0"/></linearGradient></defs><circle cx="17" cy="17" r="16.7" fill="url(#qg)"/><path d="M12.6 13.2 C12.6 10.2 14.6 8.6 17.2 8.6 C19.9 8.6 21.6 10.4 21.6 12.6 C21.6 15.6 17.4 16.2 17.4 19.6 V21" fill="none" stroke="#fff" stroke-width="2.1" stroke-linecap="round"/><circle cx="17.4" cy="25.2" r="1.5" fill="#fff"/></svg>
<div class="t" style="left:712.1px;top:423.6px;font:11.5px 'Liberation Sans';color:#111;transform:scaleX(1.0476);">Comprobante esta listo para ser grabado</div>
<div class="t" style="left:712.1px;top:450.9px;font:11.5px 'Liberation Sans';color:#111;transform:scaleX(1.0107);">Grabar ahora?</div>
<div style="position:absolute;left:785px;top:498px;width:74px;height:21px;border:1px solid #d3d3d3;border-radius:4px;background:#fdfdfd;box-shadow:0 1px 0 #c8c8c8"></div>
<div class="t" style="left:817.8px;top:502.5px;font:12px 'Liberation Sans';color:#111;transform:scaleX(0.8815);">Sí</div>
<div style="position:absolute;left:870px;top:498px;width:74px;height:21px;border:1px solid #d3d3d3;border-radius:4px;background:#fdfdfd;box-shadow:0 1px 0 #c8c8c8"></div>
<div class="t" style="left:900.5px;top:502.5px;font:12px 'Liberation Sans';color:#111;transform:scaleX(0.9613);">No</div>
<div style="position:absolute;left:627px;top:353px;width:353px;height:194px;border:4px solid #e4121a"></div>
<div class="t" style="left:1495.5px;top:117.2px;font:italic bold 41px 'Liberation Sans';color:#222222;transform:scaleX(0.9564);">Café</div>
<div style="position:absolute;left:1497px;top:160px;width:76px;height:2.2px;background:#f6c400"></div>
<div class="t" style="left:56.0px;top:798.9px;font:12.5px 'Liberation Sans';color:#ececec;transform:scaleX(0.9833);">APRENDIENDO S.A.S</div>
<div class="t" style="left:56.0px;top:815.5px;font:12.5px 'Liberation Sans';color:#ececec;transform:scaleX(0.9474);">Nit: 777888999  Codigo: ASECON</div>
<div class="t" style="left:1117.6px;top:793.2px;font:11px 'Liberation Sans';color:#ececec;transform:scaleX(0.9542);">LICENCIA PARA EVALUACION Y PRUEBAS</div>
<div class="t" style="left:1117.6px;top:808.6px;font:12px 'Liberation Mono';color:#ececec;transform:scaleX(1.0121);">Código: 6IU127GUX</div>
<div class="t" style="left:1117.6px;top:823.5px;font:12px 'Liberation Mono';color:#ececec;transform:scaleX(1.0149);">mauricio@ingesoftnet.com</div>
<div class="t" style="left:1404.2px;top:795.7px;font:12.5px 'Liberation Sans';color:#ececec;">Código servicio</div>
<div class="t" style="left:1422.2px;top:813.2px;font:bold 15px 'Liberation Sans';color:#ffffff;transform:scaleX(1.1146);">38194</div>
<svg style="position:absolute;left:2px;top:4px" width="16" height="16" viewBox="0 0 16 16"><defs><radialGradient id="gold2" cx="0.5" cy="0.45" r="0.65"><stop offset="0" stop-color="#ece28c"/><stop offset="0.65" stop-color="#dec84a"/><stop offset="1" stop-color="#cdb000"/></radialGradient></defs><rect x="0.3" y="0.3" width="15.4" height="15.4" rx="2" fill="url(#gold2)" stroke="#d2b400" stroke-width="0.6"/><ellipse cx="8.5" cy="8.5" rx="6" ry="5.2" fill="#e2dc9c" transform="rotate(-12 8.5 8.5)"/><path d="M6.8 5.6 Q10 3.6 13.2 5.6 Q10 7.2 6.8 5.6 Z" fill="#1a1a2a"/><path d="M2.8 8.2 Q6 6.4 9 8.2 Q11.5 9.6 14.2 8.8 Q11.5 11.2 8.5 9.8 Q6 8.6 2.8 8.2 Z" fill="#1c1c2c"/><path d="M3.4 11.2 Q6 10.4 9 11.8 Q6 13.6 3.4 11.2 Z" fill="#1a1a2a"/></svg>
<svg style="position:absolute;left:9.5px;top:114px" width="16.5" height="16.5" viewBox="0 0 16 16"><defs><radialGradient id="gold9" cx="0.5" cy="0.45" r="0.65"><stop offset="0" stop-color="#ece28c"/><stop offset="0.65" stop-color="#dec84a"/><stop offset="1" stop-color="#cdb000"/></radialGradient></defs><rect x="0.3" y="0.3" width="15.4" height="15.4" rx="2" fill="url(#gold9)" stroke="#d2b400" stroke-width="0.6"/><ellipse cx="8.5" cy="8.5" rx="6" ry="5.2" fill="#e2dc9c" transform="rotate(-12 8.5 8.5)"/><path d="M6.8 5.6 Q10 3.6 13.2 5.6 Q10 7.2 6.8 5.6 Z" fill="#1a1a2a"/><path d="M2.8 8.2 Q6 6.4 9 8.2 Q11.5 9.6 14.2 8.8 Q11.5 11.2 8.5 9.8 Q6 8.6 2.8 8.2 Z" fill="#1c1c2c"/><path d="M3.4 11.2 Q6 10.4 9 11.8 Q6 13.6 3.4 11.2 Z" fill="#1a1a2a"/></svg>
<svg style="position:absolute;left:567px;top:123px" width="17" height="17" viewBox="0 0 16 16"><defs><radialGradient id="gold567" cx="0.5" cy="0.45" r="0.65"><stop offset="0" stop-color="#ece28c"/><stop offset="0.65" stop-color="#dec84a"/><stop offset="1" stop-color="#cdb000"/></radialGradient></defs><rect x="0.3" y="0.3" width="15.4" height="15.4" rx="2" fill="url(#gold567)" stroke="#d2b400" stroke-width="0.6"/><ellipse cx="8.5" cy="8.5" rx="6" ry="5.2" fill="#e2dc9c" transform="rotate(-12 8.5 8.5)"/><path d="M6.8 5.6 Q10 3.6 13.2 5.6 Q10 7.2 6.8 5.6 Z" fill="#1a1a2a"/><path d="M2.8 8.2 Q6 6.4 9 8.2 Q11.5 9.6 14.2 8.8 Q11.5 11.2 8.5 9.8 Q6 8.6 2.8 8.2 Z" fill="#1c1c2c"/><path d="M3.4 11.2 Q6 10.4 9 11.8 Q6 13.6 3.4 11.2 Z" fill="#1a1a2a"/></svg>
<svg style="position:absolute;left:17px;top:61px" width="18" height="19" viewBox="0 0 18 19"><rect x="0" y="0" width="17" height="18" fill="#fff"/><rect x="1.2" y="2.3" width="11.5" height="15" fill="url(#eg)" stroke="#9a9a9a" stroke-width="1.1"/><defs><linearGradient id="eg" x1="0" y1="0" x2="1" y2="1"><stop offset="0" stop-color="#bdbdbd"/><stop offset="1" stop-color="#f4f4f4"/></linearGradient></defs><path d="M6.5 14.5 L15.8 2.8" stroke="#d08a10" stroke-width="2.6" stroke-linecap="round"/><path d="M6.7 14.2 L15.6 3" stroke="#f4b830" stroke-width="1.2"/><circle cx="16" cy="2.2" r="1.2" fill="#f08080"/></svg>
<svg style="position:absolute;left:102px;top:56px" width="24" height="26" viewBox="0 0 24 26"><path d="M5 15.5 C2 14.5 2.5 11 4.5 9 C4.5 4 7 1 11.5 0.8 C16 0.6 19 3.5 19.3 8 C19.6 12 19 15 17.5 17 L8 17 C6.5 16.5 5.5 16 5 15.5 Z" fill="#b8780c"/><ellipse cx="12.8" cy="10.6" rx="3.8" ry="5.6" fill="#f8d2a0"/><path d="M7.5 9 C8 4.5 11 3 14.5 4 C13 5.5 11 7.5 7.5 9 Z" fill="#b8780c"/><path d="M0.5 25 C0.8 21 2.5 19 8 18 L12 24.5 L16 18 C21.5 19 23.2 21 23.5 25 Z" fill="#050505"/><path d="M9.5 17.2 L12 24.5 L14.5 17.2 L12 16.2 Z" fill="#f3c47c"/></svg>
<svg style="position:absolute;left:191px;top:57px" width="25" height="26" viewBox="0 0 25 26"><rect width="25" height="26" fill="#fff"/><defs><linearGradient id="cg" x1="0" y1="0" x2="1" y2="1"><stop offset="0" stop-color="#ff3a00"/><stop offset="1" stop-color="#ff7a30"/></linearGradient></defs><path d="M12.9 1 L23.4 6.6 L23.4 18.8 L12.9 25 L2.1 19 L2.1 6.6 Z" fill="url(#cg)" stroke="#c80000" stroke-width="1"/><path d="M2.6 6.9 L12.9 12.2 L23 6.9 M12.9 12.2 V24.5" stroke="#ffb08a" stroke-width="1" fill="none"/></svg>
<svg style="position:absolute;left:278px;top:57px" width="25" height="26" viewBox="0 0 25 26"><rect width="25" height="26" fill="#fff"/><path d="M2.5 6.5 L10.5 1.5 L21 9 L21 18.5 L13 23 L2.5 15.5 Z" fill="#bdbdbd" stroke="#8a8a8a" stroke-width="0.8"/><path d="M2.5 6.5 L10.5 1.5 L21 9 L13 14 Z" fill="#dedede"/><path d="M2.5 6.5 L13 14 L13 23 L2.5 15.5 Z" fill="#c8c8c8"/><path d="M13 14 L21 9 L24 13.5 L24 21 L17.5 25 L13 23 Z" fill="#f2f2f2" stroke="#8a8a8a" stroke-width="0.8"/><path d="M16.5 19 L23 15.5 L23 18 L16.5 21.5 Z" fill="#4a4a6a"/><path d="M3.5 12 L6 13.5 M7 14.5 L9.5 16" stroke="#333" stroke-width="1.6"/><circle cx="15" cy="23.5" r="1.4" fill="#222"/><rect x="19" y="22.5" width="2" height="1" fill="#e8a020"/></svg>
<svg style="position:absolute;left:368.5px;top:57px" width="23" height="25" viewBox="0 0 23 25"><defs><linearGradient id="bg1" x1="0" y1="0" x2="1" y2="1"><stop offset="0" stop-color="#ffffff"/><stop offset="1" stop-color="#aea8dc"/></linearGradient></defs><path d="M6.5 7 C6 2.5 8 0.8 10.5 1.2 C13 1.6 15.5 3.5 15.3 8" fill="none" stroke="#6c6890" stroke-width="2.6"/><path d="M0.75 5.9 L4.5 4 L19.2 10.1 L14.9 8.7 Z" fill="#7a7698"/><path d="M0.75 5.9 L14.9 8.7 L14.9 21.8 L0.75 16.1 Z" fill="url(#bg1)" stroke="#6a6690" stroke-width="1.1"/><path d="M14.9 8.7 L19.2 10.1 L19.2 22.5 L14.9 23 Z" fill="#555078" stroke="#48446a" stroke-width="0.8"/><path d="M19.2 17 L22 19.5 L19 23 Z" fill="#b0bcc8"/></svg>
<svg style="position:absolute;left:445px;top:57px" width="23" height="25" viewBox="0 0 23 25"><defs><linearGradient id="bg1" x1="0" y1="0" x2="1" y2="1"><stop offset="0" stop-color="#ffffff"/><stop offset="1" stop-color="#aea8dc"/></linearGradient></defs><path d="M6.5 7 C6 2.5 8 0.8 10.5 1.2 C13 1.6 15.5 3.5 15.3 8" fill="none" stroke="#6c6890" stroke-width="2.6"/><path d="M0.75 5.9 L4.5 4 L19.2 10.1 L14.9 8.7 Z" fill="#7a7698"/><path d="M0.75 5.9 L14.9 8.7 L14.9 21.8 L0.75 16.1 Z" fill="url(#bg1)" stroke="#6a6690" stroke-width="1.1"/><path d="M14.9 8.7 L19.2 10.1 L19.2 22.5 L14.9 23 Z" fill="#555078" stroke="#48446a" stroke-width="0.8"/><path d="M19.2 17 L22 19.5 L19 23 Z" fill="#b0bcc8"/></svg>
<svg style="position:absolute;left:517px;top:60px" width="27" height="21" viewBox="0 0 27 21"><rect x="0.6" y="4" width="16" height="15" fill="#fdf8e4" stroke="#9aa8bc" stroke-width="1.1"/><path d="M10 4 L16.6 10.6 L10 10.6 Z" fill="#cfe0f8" stroke="#7a8aa0" stroke-width="0.9"/><path d="M3 8.5 H7 M3 10.5 H7 M3 12.5 H7 M3 14.5 H13 M3 16.5 H13" stroke="#a4b6d6" stroke-width="1"/><rect x="12.8" y="0.6" width="13.4" height="6.8" fill="#fff" stroke="#5b78b0" stroke-width="1.1"/><rect x="13.2" y="1" width="12.6" height="2.2" fill="#6a8cc8"/><rect x="13.5" y="3.6" width="5" height="3.4" fill="#cfe2fa"/><rect x="19" y="3.6" width="6.5" height="3.4" fill="#fbf2dc"/><path d="M16.5 18.5 C17 14 19 12 21 11.5 L19.8 9.5 L25.5 10.5 L23.8 15.5 L22.5 13.5 C21 14.5 19.5 16.5 16.5 18.5 Z" fill="#4cc43a" stroke="#2d9a20" stroke-width="0.8"/></svg>
<svg style="position:absolute;left:630px;top:61px" width="19" height="18" viewBox="0 0 19 18"><rect x="8" y="1.8" width="3.4" height="4" fill="#d6d650" stroke="#7a7a18" stroke-width="0.8" transform="rotate(0 9.7 10.2)"/><rect x="8" y="1.8" width="3.4" height="4" fill="#d6d650" stroke="#7a7a18" stroke-width="0.8" transform="rotate(45 9.7 10.2)"/><rect x="8" y="1.8" width="3.4" height="4" fill="#d6d650" stroke="#7a7a18" stroke-width="0.8" transform="rotate(90 9.7 10.2)"/><rect x="8" y="1.8" width="3.4" height="4" fill="#d6d650" stroke="#7a7a18" stroke-width="0.8" transform="rotate(135 9.7 10.2)"/><rect x="8" y="1.8" width="3.4" height="4" fill="#d6d650" stroke="#7a7a18" stroke-width="0.8" transform="rotate(180 9.7 10.2)"/><rect x="8" y="1.8" width="3.4" height="4" fill="#d6d650" stroke="#7a7a18" stroke-width="0.8" transform="rotate(225 9.7 10.2)"/><rect x="8" y="1.8" width="3.4" height="4" fill="#d6d650" stroke="#7a7a18" stroke-width="0.8" transform="rotate(270 9.7 10.2)"/><rect x="8" y="1.8" width="3.4" height="4" fill="#d6d650" stroke="#7a7a18" stroke-width="0.8" transform="rotate(315 9.7 10.2)"/><circle cx="9.7" cy="10.2" r="6" fill="#d6d650" stroke="#7a7a18" stroke-width="0.8"/><circle cx="9.7" cy="10.2" r="5.3" fill="#d8d858"/><circle cx="6" cy="12" r="1" fill="#8a8a20"/><circle cx="13" cy="12" r="1" fill="#8a8a20"/><rect x="7.2" y="0.5" width="5" height="7" rx="2" fill="#7f98a8"/><rect x="8.4" y="2.6" width="2.6" height="4.6" fill="#f4f4f4"/></svg>
<svg style="position:absolute;left:720px;top:61px" width="16" height="18" viewBox="0 0 16 18"><path d="M2.5 9 C2 4 3 1.5 4.5 1.5 C6 1.5 6.5 4 6 9 Z" fill="#10c010"/><rect x="5.2" y="4" width="1.8" height="7" fill="#8a10a0"/><rect x="7.5" y="1" width="2" height="9" fill="#f0f000"/><circle cx="8.5" cy="1.2" r="1" fill="#9a8a00"/><path d="M10 4 L12.5 3.5 L13 7 L10 9 Z" fill="#1010f0"/><path d="M8.5 10.5 L14.8 3.8 L15.8 5 L10 11 Z" fill="#f01010"/><path d="M0.8 9.5 L15.2 9.5 L14.5 15 L11 17.3 L5 17.3 L1.5 15 Z" fill="#cfcfcf" stroke="#a8a8a8" stroke-width="0.8"/><path d="M1.5 12 H14.5" stroke="#eee" stroke-width="1"/></svg>
<svg style="position:absolute;left:809px;top:64px" width="13" height="12" viewBox="0 0 13 12"><rect x="0.5" y="0.5" width="12" height="10.5" fill="#93d4ea" stroke="#505050" stroke-width="1"/><path d="M2.5 3 H5 M2.5 4.5 H5 M2.5 6.5 H5 M2.5 8 H5" stroke="#4a4a4a" stroke-width="0.9"/><rect x="7" y="2.3" width="3.5" height="2.6" fill="#fff" stroke="#4a4040" stroke-width="0.9"/><rect x="7" y="6.3" width="3.5" height="2.6" fill="#fff" stroke="#4a4040" stroke-width="0.9"/></svg>
<svg style="position:absolute;left:888px;top:59px" width="24" height="22" viewBox="0 0 24 22"><path d="M7.2 0.5 H18 L22.5 4.5 V21.5 H7.2 Z" fill="#f2ecc8" stroke="#e0b060" stroke-width="1.1"/><path d="M18 0.5 V4.5 H22.5" fill="none" stroke="#e0b060" stroke-width="1"/><path d="M13 11 H19 M13 12.5 H19 M13 14.5 H19 M13 16 H19" stroke="#a8a8a8" stroke-width="0.8"/><path d="M10.5 14.5 L17.5 21" stroke="#d4a040" stroke-width="2.4" stroke-linecap="round"/><circle cx="7.5" cy="9.2" r="6.6" fill="#fafafa" stroke="#a0a0a0" stroke-width="1.1"/><path d="M2 6 C1 8.5 1 10.5 2.5 13.5 L4.5 13.5 L4.5 4.5 Z" fill="#8ccaf8"/><path d="M7 6 H9 M6.5 8.3 H10 M6.5 9.8 H10 M7 12 H9" stroke="#888" stroke-width="0.8"/></svg>
<svg style="position:absolute;left:982px;top:62px" width="18" height="18" viewBox="0 0 18 18"><path d="M0.8 2.2 H7.5 C9.5 2.2 10.5 3.5 11 5.5" fill="none" stroke="#f2b878" stroke-width="1.5"/><path d="M0.8 5.2 H6 C7.8 5.2 8.8 6.5 9.2 8.5" fill="none" stroke="#f2b878" stroke-width="1.5"/><path d="M2.8 8.5 H7 V7 H11.5 L14.5 9.5 L16.8 12.2 L11.8 16.2 H1.8 L2.2 12 Z" fill="#ffee10" stroke="#d8b400" stroke-width="0.7"/><path d="M11.5 7 L14.5 9.5 L16.8 12.2 L13.5 14.5 L11.5 12 Z" fill="#f4d800"/><path d="M1.5 16.6 H12 L17.2 12.2" fill="none" stroke="#7a4412" stroke-width="1.7"/><path d="M2 16 L3 14.8 L4 16 L5 14.8 L6 16 L7 14.8 L8 16" fill="none" stroke="#9a6a20" stroke-width="0.7"/><path d="M5 10.2 H8.5 M4.8 13.2 H8.5" stroke="#a0b8d8" stroke-width="0.9"/></svg>
<svg style="position:absolute;left:1048px;top:61px" width="17" height="18" viewBox="0 0 17 18"><rect x="1" y="2" width="13.5" height="14.8" fill="url(#ng)" stroke="#7d94c8" stroke-width="1.2"/><defs><linearGradient id="ng" x1="0" y1="0" x2="1" y2="1"><stop offset="0" stop-color="#f4f8ff"/><stop offset="1" stop-color="#a8cdf4"/></linearGradient></defs><path d="M4 4.8 H12 M4 14.4 H12" stroke="#8aa8d8" stroke-width="0.9"/><rect x="4" y="6.5" width="7.5" height="5.5" fill="#fff" stroke="#7890c0" stroke-width="0.8"/><rect x="4.2" y="6.8" width="2.5" height="1.2" fill="#5a5af0"/><path d="M7.5 11 L15.5 2.5" stroke="#f05040" stroke-width="2.6" stroke-linecap="round"/><path d="M6.8 11.5 L8 10.8" stroke="#c84010" stroke-width="1.6"/></svg>
<svg style="position:absolute;left:1113px;top:57px" width="26" height="26" viewBox="0 0 26 26"><rect width="26" height="26" fill="#fff"/><path d="M1.2 23.5 V4.5 C1.2 3.5 2 2.8 3 2.8 H10.5 L12.5 5 H20.5 L21.5 7 V22" fill="#fafafa" stroke="#8c90a8" stroke-width="1.1"/><path d="M4 23.5 V11 C4 9.8 4.8 9.3 6 9.3 H14 L15.5 7.6 H24 C24.6 7.6 25.2 8.2 25.2 9 V22.5 L24 23.5 Z" fill="url(#fg)" stroke="#2a6fd6" stroke-width="1.1"/><defs><linearGradient id="fg" x1="0" y1="0" x2="1" y2="1"><stop offset="0" stop-color="#4a90ee"/><stop offset="1" stop-color="#a4d0ff"/></linearGradient></defs></svg>
<svg style="position:absolute;left:573px;top:154px" width="22" height="19" viewBox="0 0 22 19"><rect x="5.5" y="2.5" width="6.2" height="6" fill="#fff" stroke="#333" stroke-width="1.1"/><rect x="5.5" y="2.5" width="6.2" height="2" fill="#1a10a0"/><rect x="1.5" y="5.5" width="6.2" height="6" fill="#fff" stroke="#111" stroke-width="1.1"/><rect x="1.5" y="5.5" width="6.2" height="2" fill="#1a10a0"/><path d="M6 15.5 H11" stroke="#555" stroke-width="0.9" stroke-dasharray="1 1"/><path d="M13 16 L18.5 7" stroke="#111" stroke-width="3.2" stroke-linecap="round"/><path d="M13.6 14.8 L18 7.6" stroke="#f0f020" stroke-width="1.4"/><path d="M18.2 7.2 L19.6 5.2" stroke="#8a1010" stroke-width="2.4" stroke-linecap="round"/></svg>
<svg style="position:absolute;left:1415px;top:155px" width="32" height="25" viewBox="0 0 32 25"><path d="M14.5 1 L31 10.2 L17.5 24 L1.5 14.6 Z" fill="#7fd8c2" stroke="#3b9e8a" stroke-width="1.1" stroke-linejoin="round"/><path d="M16.5 2.2 L27.5 8.4 L22 13.2 L11 7 Z" fill="#fbfbf0"/><path d="M14 8 L25.5 8.2 L22 13.2 Z" fill="#e0d860"/><path d="M5 14.8 L10.2 10.2 L18.5 15 L13.5 19.6 Z" fill="#d0d0d0" stroke="#8a8a8a" stroke-width="0.7"/><path d="M8 14.2 L10.8 11.8 L15.2 14.3 L12.5 16.8 Z" fill="#a8a8a8"/></svg>
<div style="position:absolute;left:1411px;top:154px;width:38px;height:38px;border:1px solid #e6dc00"></div>
<div style="position:absolute;left:1411px;top:154px;width:38px;height:38px;border:1px dotted #303030"></div>
<svg style="position:absolute;left:977px;top:250px" width="16" height="13" viewBox="0 0 16 13"><path d="M1 12.5 L2.5 5 C3 2 4 0.8 5 0.8 C6 0.8 6.8 2 7.2 4 L7.5 8 L8.5 8 L8.8 4 C9.2 2 10 0.8 11 0.8 C12 0.8 13 2 13.5 5 L15 12.5 L10.2 12.5 C9.8 10.5 9 9.5 8 9.5 C7 9.5 6.2 10.5 5.8 12.5 Z" fill="#4a2aa8"/><ellipse cx="4.8" cy="4" rx="0.8" ry="1.3" fill="#d8d0f0"/><ellipse cx="11" cy="4" rx="0.8" ry="1.3" fill="#d8d0f0"/><ellipse cx="3.8" cy="7.5" rx="0.7" ry="1.1" fill="#d8d0f0"/><ellipse cx="11.8" cy="7.5" rx="0.7" ry="1.1" fill="#d8d0f0"/></svg>
<svg style="position:absolute;left:756px;top:277px" width="16" height="13" viewBox="0 0 16 13"><path d="M1 12.5 L2.5 5 C3 2 4 0.8 5 0.8 C6 0.8 6.8 2 7.2 4 L7.5 8 L8.5 8 L8.8 4 C9.2 2 10 0.8 11 0.8 C12 0.8 13 2 13.5 5 L15 12.5 L10.2 12.5 C9.8 10.5 9 9.5 8 9.5 C7 9.5 6.2 10.5 5.8 12.5 Z" fill="#4a2aa8"/><ellipse cx="4.8" cy="4" rx="0.8" ry="1.3" fill="#d8d0f0"/><ellipse cx="11" cy="4" rx="0.8" ry="1.3" fill="#d8d0f0"/><ellipse cx="3.8" cy="7.5" rx="0.7" ry="1.1" fill="#d8d0f0"/><ellipse cx="11.8" cy="7.5" rx="0.7" ry="1.1" fill="#d8d0f0"/></svg>
<svg style="position:absolute;left:584px;top:670px" width="24" height="24" viewBox="0 0 24 24"><defs><radialGradient id="gg" cx="0.45" cy="0.3" r="0.75"><stop offset="0" stop-color="#a8d860"/><stop offset="0.6" stop-color="#5f9e1e"/><stop offset="1" stop-color="#3f7a10"/></radialGradient></defs><circle cx="12.3" cy="11.8" r="11.5" fill="url(#gg)"/><path d="M12.3 5 V18.5 M5.5 11.8 H19" stroke="#fff" stroke-width="3.4"/></svg>
<svg style="position:absolute;left:624px;top:670px" width="24" height="24" viewBox="0 0 24 24"><circle cx="11.7" cy="11.8" r="11.5" fill="url(#gg)"/><path d="M5 11.3 H18.5" stroke="#fff" stroke-width="3.2"/></svg>
<svg style="position:absolute;left:665px;top:672px" width="20" height="20" viewBox="0 0 20 20"><defs><linearGradient id="bng" x1="0" y1="0" x2="1" y2="0"><stop offset="0" stop-color="#5a5a5a"/><stop offset="0.4" stop-color="#9a9a9a"/><stop offset="1" stop-color="#5e5e5e"/></linearGradient></defs><rect x="1.5" y="1" width="6" height="6" rx="2.5" fill="#7e7e7e"/><rect x="12" y="1" width="6" height="6" rx="2.5" fill="#7e7e7e"/><ellipse cx="4.5" cy="1.6" rx="2.5" ry="1" fill="#94bcd8"/><ellipse cx="15" cy="1.6" rx="2.5" ry="1" fill="#94bcd8"/><rect x="0.5" y="4.5" width="8" height="14.5" rx="3" fill="url(#bng)"/><rect x="11" y="4.5" width="8" height="14.5" rx="3" fill="url(#bng)"/><rect x="8" y="7" width="3.5" height="6" fill="#6a6a6a"/></svg>
<svg style="position:absolute;left:744px;top:674px" width="21" height="16" viewBox="0 0 21 16"><path d="M1 1 H7.5 L12 6 L15.5 1 H20 L14.5 8 L19.5 15 H12.5 L9.5 11 L6.5 15 H0.5 L6 8 Z" fill="#1a9a9a" stroke="#0a5a5a" stroke-width="0.9"/><path d="M3 1.8 H7 L18 14.2 H13.5 Z" fill="#40e8e8"/></svg>
<svg style="position:absolute;left:16px;top:799px" width="33" height="30" viewBox="0 0 33 30"><defs><linearGradient id="fcg" x1="0" y1="0" x2="1" y2="1"><stop offset="0" stop-color="#ff3000"/><stop offset="1" stop-color="#ff8040"/></linearGradient></defs><path d="M1 28.5 V6 L8.5 13 V6 L15.5 13 V6 L23 13.5 L27 1.5 H31.5 V28.5 Z" fill="url(#fcg)" stroke="#b00000" stroke-width="1.1"/><rect x="5" y="18.5" width="4.2" height="4.2" fill="#050505"/><rect x="14.3" y="18.5" width="4.2" height="4.2" fill="#0a1420"/><rect x="23.5" y="18.5" width="4.2" height="4.2" fill="#0a1a2a"/></svg>
<svg style="position:absolute;left:1082px;top:799px" width="35" height="33" viewBox="0 0 35 33"><path d="M0.5 0.5 H17.5 L23.5 6.5 V28 H0.5 Z" fill="#f2f2f2" stroke="#c8c8c8" stroke-width="0.8"/><path d="M17.5 0.5 V6.5 H23.5" fill="#fff"/><path d="M3.5 6.5 H15 M3.5 8.5 H21 M3.5 10 H21 M3.5 11.5 H21 M3.5 15 H21 M3.5 17 H21 M3.5 19 H21 M3.5 21 H21 M3.5 23 H21" stroke="#b0b0b0" stroke-width="0.8"/><path d="M14 30 L22 22.5" stroke="#f0c040" stroke-width="3.6" stroke-linecap="round"/><circle cx="26" cy="19" r="6.6" fill="#f6d050" stroke="#d8a820" stroke-width="0.8"/><circle cx="27.5" cy="16.5" r="1.2" fill="#8a6a10"/></svg>
<svg style="position:absolute;left:1496px;top:725px" width="104" height="122" viewBox="0 0 104 122">
<defs><radialGradient id="ry" cx="0.4" cy="0.35" r="0.7"><stop offset="0" stop-color="#fff26a"/><stop offset="0.6" stop-color="#f2da22"/><stop offset="1" stop-color="#dcb400"/></radialGradient>
<radialGradient id="re" cx="0.45" cy="0.4" r="0.6"><stop offset="0" stop-color="#3a3a5c"/><stop offset="1" stop-color="#14142e"/></radialGradient></defs>
<path d="M31 15 L37 26" stroke="#111" stroke-width="1.8"/><ellipse cx="29.5" cy="11" rx="3" ry="5" fill="#f2d420" transform="rotate(-25 29.5 11)"/>
<path d="M58 96 C68 88 92 86 104 98 L104 122 L68 122 C58 112 55 103 58 96 Z" fill="url(#ry)" stroke="#111" stroke-width="1.5"/>
<ellipse cx="78" cy="105" rx="12" ry="8.5" fill="#151515" stroke="#f0f0e0" stroke-width="1" transform="rotate(-25 78 105)"/><path d="M69.5 104.5 C75 100 80 101 86.5 98.5 M71 109 C76 105.5 81 106.5 87 103" stroke="#f0d020" stroke-width="2.4" fill="none"/>
<path d="M9 98 L21 95 M10 102.5 L22 99 M13 93 L21 92.5 M13 107 L22 103" stroke="#111" stroke-width="1.8"/>
<ellipse cx="35" cy="103" rx="10" ry="7" fill="url(#ry)" stroke="#111" stroke-width="1"/>
<ellipse cx="10" cy="80" rx="7" ry="11" fill="url(#ry)" stroke="#111" stroke-width="1.5" transform="rotate(-25 10 80)"/>
<ellipse cx="96" cy="42" rx="7" ry="11" fill="url(#ry)" stroke="#111" stroke-width="1.5" transform="rotate(-25 96 42)"/>
<ellipse cx="56" cy="61" rx="45" ry="37" fill="url(#ry)" stroke="#d8b800" stroke-width="1" transform="rotate(-25 56 61)"/>
<path d="M27 34 C32 26 42 22 52 21" stroke="#111" stroke-width="2" fill="none"/><ellipse cx="40" cy="28" rx="12" ry="4.5" fill="#f4dc20" transform="rotate(-22 40 28)"/>
<path d="M46 33 C53 28 62 26 70 26.5" stroke="#fffbe0" stroke-width="2.6" fill="none" stroke-linecap="round"/><path d="M75 28 C78 29 80 31 81 33" stroke="#fffbe0" stroke-width="2.2" fill="none" stroke-linecap="round"/>
<ellipse cx="42.5" cy="66" rx="12.5" ry="15" fill="url(#re)" stroke="#f8f8e8" stroke-width="1.6" transform="rotate(-20 42.5 66)"/>
<ellipse cx="70.5" cy="52" rx="12.5" ry="15" fill="url(#re)" stroke="#f8f8e8" stroke-width="1.6" transform="rotate(-20 70.5 52)"/>
<circle cx="44" cy="69" r="5" fill="#2f72b8"/><path d="M40 71 C41 67 45 65.5 48 67.5" stroke="#d8f0ff" stroke-width="2" fill="none"/><circle cx="34.5" cy="61.5" r="1.8" fill="#e8f0ff"/>
<circle cx="72" cy="55" r="5" fill="#2f72b8"/><path d="M68 57 C69 53 73 51.5 76 53.5" stroke="#d8f0ff" stroke-width="2" fill="none"/><circle cx="62" cy="48" r="1.8" fill="#e8f0ff"/>
<path d="M56 83 C58 90 70 90 76 74 Z" fill="#262626" stroke="#262626" stroke-width="1.5" stroke-linejoin="round"/>
</svg>
</body></html>
